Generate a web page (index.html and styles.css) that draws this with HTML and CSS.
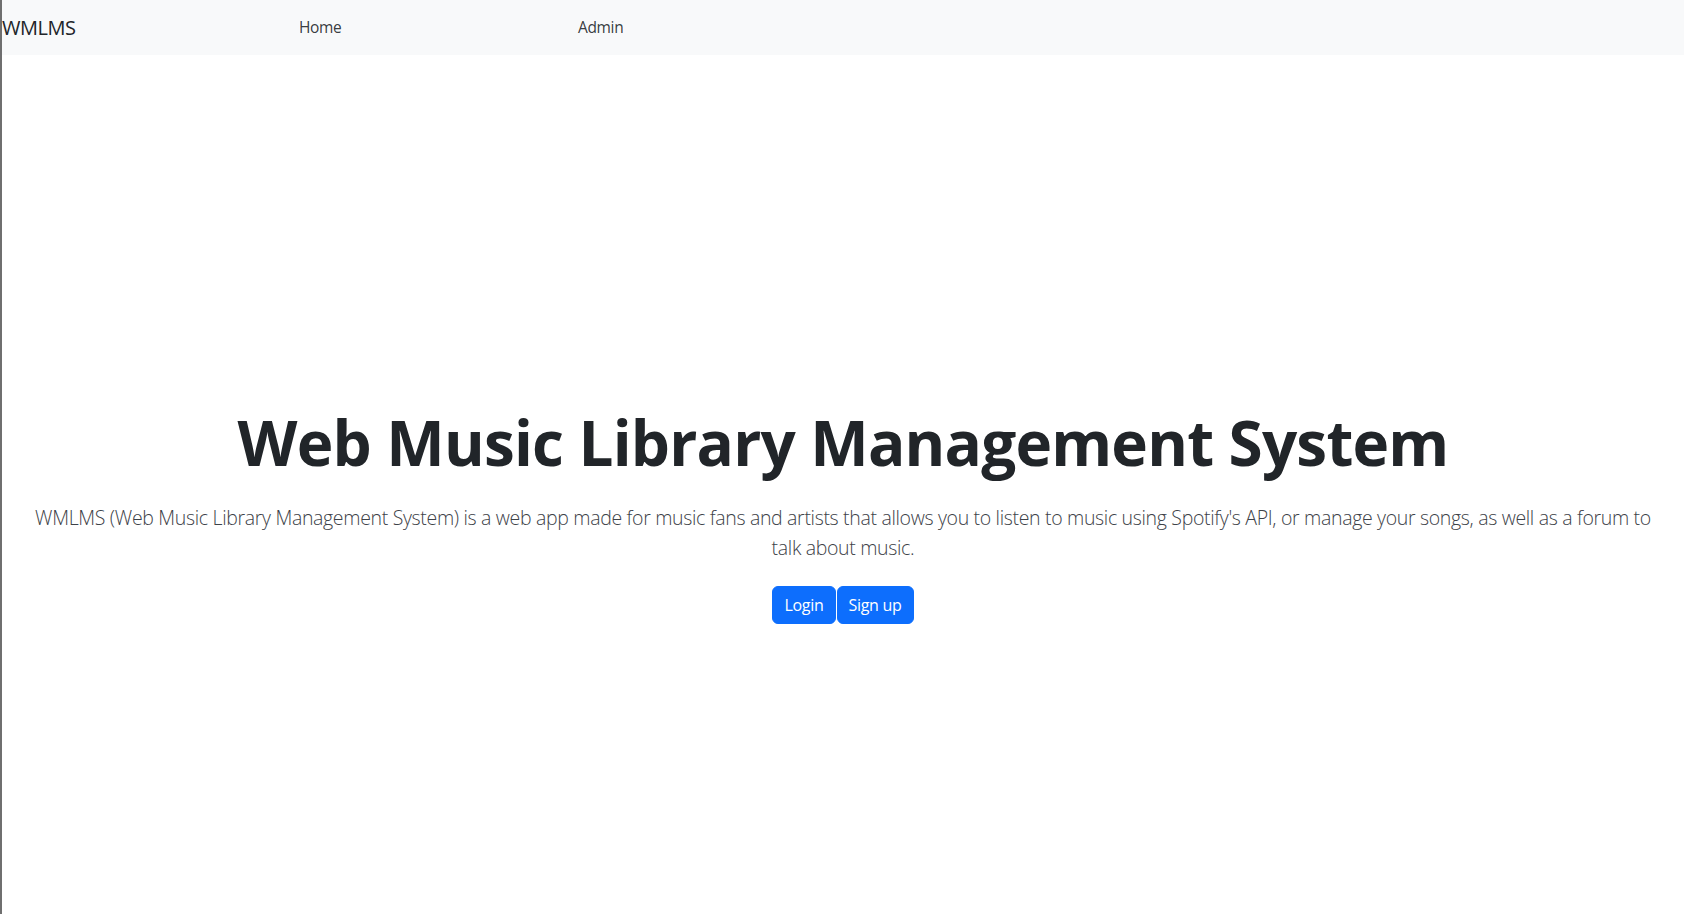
FILE: index.html
```html
<!DOCTYPE html>
<html lang="en">
<head>
<meta charset="utf-8">
<title>WMLMS</title>
<link rel="stylesheet" href="styles.css">
</head>
<body>
<nav class="navbar">
  <a class="brand" href="#">WMLMS</a>
  <ul class="nav-links">
    <li><a class="nav-link" href="#">Home</a></li>
    <li><a class="nav-link" href="#">Admin</a></li>
  </ul>
</nav>
<main class="hero">
  <h1 class="hero-title">Web Music Library Management System</h1>
  <p class="lead">WMLMS (Web Music Library Management System) is a web app made for music fans and artists that allows you to listen to music using Spotify's API, or manage your songs, as well as a forum to talk about music.</p>
  <div class="actions">
    <a class="btn" href="#">Login</a>
    <a class="btn" href="#">Sign up</a>
  </div>
</main>
</body>
</html>
```
FILE: styles.css
```css
* { box-sizing: border-box; }
html, body { height: 100%; }
body {
  margin: 0;
  border-left: 2px solid #6f6f6f;
  font-family: "Open Sans", "Noto Sans", sans-serif;
  color: #212529;
  background: #fff;
}
a { text-decoration: none; }
.navbar {
  height: 55px;
  background: #f8f9fa;
  display: flex;
  align-items: center;
}
.brand {
  width: 297px;
  font-size: 20px;
  line-height: 30px;
  letter-spacing: -0.5px;
  color: #212529;
}
.nav-links {
  display: flex;
  margin: 0;
  padding: 0 0 2px;
  list-style: none;
}
.nav-links li { width: 279px; }
.nav-link {
  font-size: 15.5px;
  line-height: 24px;
  letter-spacing: -0.35px;
  color: rgba(33, 37, 41, 0.9);
}
.hero {
  padding: 350px 24px 0;
  text-align: center;
}
.hero-title {
  margin: 0;
  font-size: 62px;
  line-height: 1.2;
  font-weight: 700;
  letter-spacing: -0.8px;
}
.lead {
  margin: 24px 0 0;
  font-size: 19.5px;
  line-height: 30px;
  font-weight: 300;
  letter-spacing: -0.33px;
  color: #3d4248;
}
.actions {
  margin-top: 23px;
  display: flex;
  justify-content: center;
  gap: 1px;
}
.btn {
  display: inline-block;
  padding: 6px 11px;
  font-size: 16px;
  line-height: 24px;
  color: #fff;
  background: #0d6efd;
  border: 1px solid #0d6efd;
  border-radius: 6px;
  letter-spacing: -0.3px;
}
```
